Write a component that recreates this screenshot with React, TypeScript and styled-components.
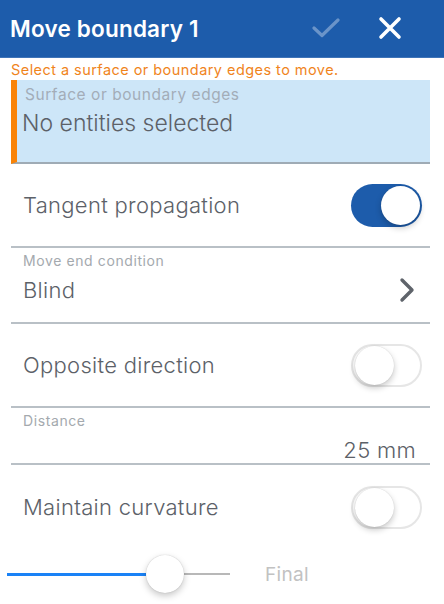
import React from "react";
import styled, { createGlobalStyle } from "styled-components";

const Global = createGlobalStyle`
  html, body { margin: 0; padding: 0; background: #ffffff; }
  body { font-family: Inter, Roboto, "Noto Sans", "Liberation Sans", sans-serif; -webkit-font-smoothing: antialiased; }
  * { box-sizing: border-box; }
`;

const Page = styled.div`
  width: 444px;
  height: 604px;
  overflow: hidden;
  background: #fff;
  display: flex;
  flex-direction: column;
  & > * { flex-shrink: 0; }
`;

const Header = styled.header`
  height: 58px;
  background: #1d5cab;
  display: flex;
  align-items: center;
  padding: 0 0 1px 10px;
  border-bottom: 1px solid #3f74b8;
`;

const Title = styled.h1`
  flex: 1;
  margin: 0;
  color: #fff;
  font-size: 22.5px;
  font-weight: 600;
  letter-spacing: 0.2px;
`;

const HeaderButton = styled.button<{ $faded?: boolean }>`
  background: none;
  border: 0;
  padding: 0;
  width: 28px;
  height: 28px;
  display: flex;
  align-items: center;
  justify-content: center;
  margin-right: ${(p) => (p.$faded ? "36px" : "40px")};
  opacity: ${(p) => (p.$faded ? 0.45 : 1)};
`;

const Hint = styled.div`
  color: #f0841c;
  font-size: 14.5px;
  letter-spacing: 0.45px;
  line-height: 22px;
  padding: 1px 0 0 11px;
  height: 22px;
`;

const SelectBox = styled.div`
  margin: 0 14px 0 11px;
  height: 84px;
  background: #cde6f8;
  border-left: 6px solid #f98307;
  border-bottom: 2px solid #9fabb5;
  padding: 6px 0 0 5px;
`;

const BoxLabel = styled.div`
  color: #a3adb8;
  font-size: 15.5px;
  letter-spacing: 0.55px;
  line-height: 18px;
  padding-left: 3px;
`;

const BoxValue = styled.div`
  color: #5c6168;
  font-size: 23px;
  font-weight: 350;
  letter-spacing: 0px;
  line-height: 30px;
  margin-top: 4px;
`;

const Row = styled.div<{ $h: number; $last?: boolean }>`
  margin: 0 14px 0 11px;
  height: ${(p) => p.$h}px;
  border-bottom: ${(p) => (p.$last ? "none" : "2px solid #b9c0c6")};
  display: flex;
  align-items: center;
  justify-content: space-between;
  padding: 0 8px 0 12px;
`;

const FieldRow = styled.div<{ $h: number }>`
  margin: 0 14px 0 11px;
  height: ${(p) => p.$h}px;
  border-bottom: 2px solid #b9c0c6;
  display: flex;
  flex-direction: column;
  padding: 4px 14px 0 12px;
`;

const RowLabel = styled.span`
  color: #5c6168;
  font-size: 22px;
  font-weight: 350;
  letter-spacing: 0.3px;
`;

const SmallLabel = styled.span`
  color: #a4a9ae;
  font-size: 14px;
  letter-spacing: 0.6px;
  line-height: 18px;
`;

const FieldLine = styled.div<{ $right?: boolean; $gap?: number }>`
  display: flex;
  align-items: center;
  justify-content: ${(p) => (p.$right ? "flex-end" : "space-between")};
  color: #5c6168;
  font-size: 22px;
  font-weight: 350;
  letter-spacing: 0.3px;
  line-height: 30px;
  margin-top: ${(p) => p.$gap ?? 5}px;
`;

const Switch = styled.div<{ $on?: boolean }>`
  width: 71px;
  height: 43px;
  border-radius: 22px;
  background: ${(p) => (p.$on ? "#1d5cab" : "#fff")};
  border: ${(p) => (p.$on ? "none" : "2px solid #e6e6e6")};
  display: flex;
  align-items: center;
  justify-content: ${(p) => (p.$on ? "flex-end" : "flex-start")};
  padding: 0 2px;
`;

const Knob = styled.div`
  width: 39px;
  height: 39px;
  border-radius: 50%;
  background: #fff;
  box-shadow: 0 3px 6px rgba(0, 0, 0, 0.22), 0 0 1px rgba(0, 0, 0, 0.2);
`;

const SliderRow = styled.div`
  height: 50px;
  display: flex;
  align-items: center;
  padding-left: 7px;
`;

const Track = styled.div`
  width: 223px;
  height: 2px;
  background: #b8b8b8;
  position: relative;
  display: flex;
  align-items: center;
`;

const TrackFill = styled.div`
  height: 3px;
  background: #1a82f6;
`;

const Thumb = styled.div`
  position: absolute;
  top: 50%;
  width: 38px;
  height: 38px;
  margin: -19px 0 0 -19px;
  border-radius: 50%;
  background: #fff;
  box-shadow: 0 3px 7px rgba(0, 0, 0, 0.22), 0 0 1px rgba(0, 0, 0, 0.25);
`;

const SliderCaption = styled.span`
  color: #c2c2c2;
  font-size: 19px;
  letter-spacing: 0.3px;
  margin-left: 35px;
`;

export default function App() {
  const fill = 158;
  return (
    <Page>
      <Global />
      <Header>
        <Title>Move boundary 1</Title>
        <HeaderButton $faded aria-label="Accept">
          <svg width="28" height="20" viewBox="0 0 28 20">
            <path d="M2 10 L10 17.5 L26 2" fill="none" stroke="#c9d8ee" strokeWidth="3.2" strokeLinecap="round" strokeLinejoin="round" />
          </svg>
        </HeaderButton>
        <HeaderButton aria-label="Close">
          <svg width="24" height="24" viewBox="0 0 24 24">
            <path d="M3 3 L21 21 M21 3 L3 21" stroke="#fff" strokeWidth="3.6" strokeLinecap="round" />
          </svg>
        </HeaderButton>
      </Header>
      <Hint>Select a surface or boundary edges to move.</Hint>
      <SelectBox>
        <BoxLabel>Surface or boundary edges</BoxLabel>
        <BoxValue>No entities selected</BoxValue>
      </SelectBox>
      <Row $h={84}>
        <RowLabel>Tangent propagation</RowLabel>
        <Switch $on>
          <Knob />
        </Switch>
      </Row>
      <FieldRow $h={76}>
        <SmallLabel>Move end condition</SmallLabel>
        <FieldLine>
          <span>Blind</span>
          <svg width="18" height="26" viewBox="0 0 18 26">
            <path d="M4 3 L14 13 L4 23" fill="none" stroke="#5f646b" strokeWidth="3.4" strokeLinecap="round" strokeLinejoin="round" />
          </svg>
        </FieldLine>
      </FieldRow>
      <Row $h={84}>
        <RowLabel>Opposite direction</RowLabel>
        <Switch>
          <Knob />
        </Switch>
      </Row>
      <FieldRow $h={57}>
        <SmallLabel>Distance</SmallLabel>
        <FieldLine $right $gap={5}>25 mm</FieldLine>
      </FieldRow>
      <Row $h={84} $last>
        <RowLabel>Maintain curvature</RowLabel>
        <Switch>
          <Knob />
        </Switch>
      </Row>
      <SliderRow>
        <Track>
          <TrackFill style={{ width: fill - 19 }} />
          <Thumb style={{ left: fill }} />
        </Track>
        <SliderCaption>Final</SliderCaption>
      </SliderRow>
    </Page>
  );
}
